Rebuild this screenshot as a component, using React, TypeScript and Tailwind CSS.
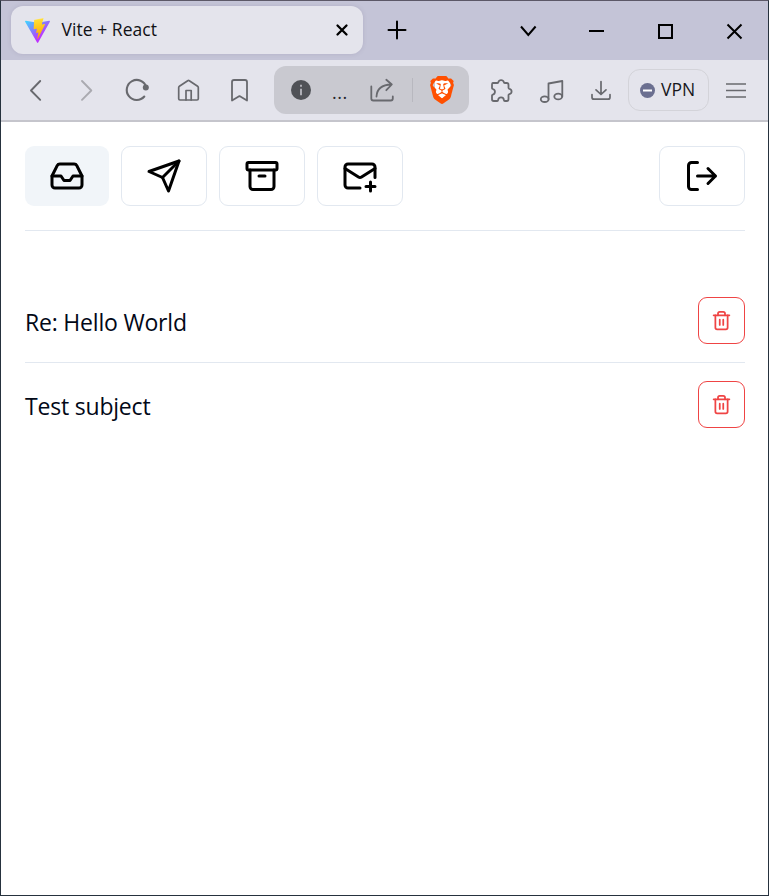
import type { ReactNode } from 'react';
import { SiBrave } from 'react-icons/si';

const UI = "font-['Open_Sans','Noto_Sans',sans-serif] font-normal";

type ArtProps = { x: number; w: number; y?: number; h?: number; color?: string; sw?: number; children: ReactNode };

// Chrome glyphs share the window's coordinate space so neighbours stay aligned.
function Art({ x, w, y = 60, h = 59, color = '#68696e', sw = 1.9, children }: ArtProps) {
  return (
    <svg
      className="block shrink-0"
      width={w}
      height={h}
      viewBox={`${x} ${y} ${w} ${h}`}
      fill="none"
      stroke={color}
      strokeWidth={sw}
      strokeLinecap="round"
      strokeLinejoin="round"
      aria-hidden="true"
    >
      {children}
    </svg>
  );
}

function ViteLogo() {
  return (
    <svg className="block shrink-0" width="25" height="25" viewBox="0 0 256 257" aria-hidden="true">
      <defs>
        <linearGradient id="viteBody" x1="-.8%" x2="57.6%" y1="7.7%" y2="78.4%">
          <stop offset="0%" stopColor="#41D1FF" />
          <stop offset="100%" stopColor="#BD34FE" />
        </linearGradient>
        <linearGradient id="viteBolt" x1="43.4%" x2="50.3%" y1="2.2%" y2="89%">
          <stop offset="0%" stopColor="#FFEA83" />
          <stop offset="8.3%" stopColor="#FFDD35" />
          <stop offset="100%" stopColor="#FFA800" />
        </linearGradient>
      </defs>
      <path fill="url(#viteBody)" d="M255.153 37.938L134.897 252.976c-2.483 4.44-8.862 4.466-11.382.048L.875 37.958c-2.746-4.814 1.371-10.646 6.827-9.67l120.385 21.517a6.537 6.537 0 0 0 2.322-.004l117.867-21.483c5.438-.991 9.574 4.796 6.877 9.62Z" />
      <path fill="url(#viteBolt)" d="M185.432.063L96.44 17.501a3.268 3.268 0 0 0-2.634 3.014l-5.474 92.456a3.268 3.268 0 0 0 3.997 3.378l24.777-5.718c2.318-.535 4.413 1.507 3.936 3.838l-7.361 36.047c-.495 2.426 1.782 4.5 4.151 3.78l15.304-4.649c2.372-.72 4.652 1.36 4.15 3.788l-11.698 56.621c-.732 3.542 3.979 5.473 5.943 2.437l1.313-2.028l72.516-144.72c1.215-2.423-.88-5.186-3.54-4.672l-25.505 4.922c-2.396.462-4.435-1.77-3.759-4.114l16.646-57.705c.677-2.35-1.37-4.583-3.769-4.113Z" />
    </svg>
  );
}

function TabStrip() {
  return (
    <div className="flex h-[59px] shrink-0 bg-[#c4c4d7]">
      <div className="mt-[5px] ml-[9.5px] flex h-12 w-[352.5px] shrink-0 items-center rounded-[12px] bg-[#e4e4ec] pl-[14.5px] shadow-[0_0_4px_rgba(100,90,130,0.18)]">
        <ViteLogo />
        <span className={`ml-[11.5px] w-[180px] pb-[2px] text-[17.5px] leading-6 tracking-[0.05px] text-[#111115] ${UI}`}>Vite + React</span>
        <div className="ml-auto">
          <Art x={328} w={35} y={14} h={32} color="#000" sw={2.3}>
            <path d="M337.5 25.5l9 9M346.500 25.500l-9 9" />
          </Art>
        </div>
      </div>
      <Art x={363} w={132} y={1} h={59} color="#000" sw={2}>
        <path d="M388.5 30h17M397 21.500v17" />
      </Art>
      <div className="ml-auto flex shrink-0">
        <Art x={495} w={66} y={1} h={59} color="#000" sw={2}>
          <path strokeLinecap="butt" d="M521 26.500l7.300 8.500 7.300-8.500" strokeLinejoin="miter" />
        </Art>
        <Art x={561} w={70} y={1} h={59} color="#000" sw={2}>
          <path strokeLinecap="butt" d="M589 31h15" />
        </Art>
        <Art x={631} w={69} y={1} h={59} color="#000" sw={2}>
          <path strokeLinejoin="miter" d="M659 25h13v13h-13z" />
        </Art>
        <Art x={700} w={68} y={1} h={59} color="#000" sw={2}>
          <path strokeLinecap="butt" d="M727.500 24.500l14 14M741.500 24.500l-14 14" />
        </Art>
      </div>
    </div>
  );
}

function BraveLogo() {
  return (
    <div className="grid w-7 shrink-0 place-items-center">
      <div className="col-start-1 row-start-1 h-[20px] w-[15px] rounded-b-[7px] bg-white" />
      <SiBrave className="relative col-start-1 row-start-1 text-[#ff5000]" size={28} />
    </div>
  );
}

function Toolbar() {
  return (
    <div className="flex h-[62px] shrink-0 items-start border-b-2 border-[#c5c5cc] bg-[#e4e4ec] pl-[9px]">
      <Art x={10} w={51}><path d="M40.200 81L31 90.500l9.200 9.300" /></Art>
      <Art x={61} w={51} color="#aaaab0"><path d="M82 81l9.300 9.500-9.300 9.300" /></Art>
      <Art x={112} w={51} sw={2.100}>
        <path d="M146.300 87A10 10 0 1 0 144.300 96.500" />
        <circle cx="145.800" cy="87.500" r="3" fill="#68696e" stroke="none" />
      </Art>
      <Art x={163} w={51} sw={1.7}>
        <path d="M178.700 87.500q0-.8.7-1.300l8.300-5.500q.8-.5 1.600 0l8.300 5.500q.7.500.7 1.300v11.200q0 1.300-1.300 1.300h-17q-1.300 0-1.300-1.300z" />
        <path d="M186 100v-9.500h5.200v9.500" />
      </Art>
      <Art x={214} w={60} sw={1.8}>
        <path d="M234 80h11q2 0 2 2v18.600l-7.500-4.500-7.500 4.500V82q0-2 2-2z" />
      </Art>
      <div className="mt-[6px] flex h-12 w-[195px] shrink-0 items-center rounded-[12px] bg-[#c9c9d0]">
        <Art x={274} w={51} y={66} h={48} sw={1.8}>
          <circle cx="301" cy="90" r="10" fill="#505257" stroke="none" />
          <path stroke="#b9b9c0" strokeLinecap="butt" d="M301 88.700v6.500M301 84.800v2" />
        </Art>
        <span className={`w-[36px] pt-[3px] pl-[7px] text-[18px] leading-6 tracking-[0.5px] text-[#26262b] ${UI}`}>...</span>
        <Art x={361} w={67} y={66} h={48} sw={1.8}>
          <path d="M371.300 86.500v12q0 2 2 2h17.500q2 0 2-2v-2" />
          <path d="M376.500 96.500q.5-11.500 15-12M386.300 79.800l5.500 4.700-5.500 5.700" />
          <path stroke="#b8b8bf" strokeWidth="1" strokeLinecap="butt" d="M412.500 78v24" />
        </Art>
        <BraveLogo />
      </div>
      <Art x={469} w={58} sw={1.8}>
        <path d="M492.700 83h4.700q.9 0 1-.9a2.800 2.800 0 0 1 5.400 0q.1.900 1 .9h2q1.700 0 1.700 1.700v3.100q0 .8.900 1a2.700 2.700 0 0 1 0 5.300q-.9.200-.9 1v4.200q0 1.700-1.700 1.700h-2q-.8 0-.9-.8a2.900 2.900 0 0 0-5.800 0q-.1.800-.9.800h-3.500q-1.700 0-1.700-1.700v-3.800q0-.7.800-.9a2.900 2.900 0 0 0 0-5.600q-.8-.2-.8-.9v-3.400q0-1.700.7-1.700z" />
      </Art>
      <Art x={527} w={49} sw={1.800}>
        <path d="M548.500 99V83.500L562.300 81v15.500" />
        <ellipse cx="544.700" cy="99.200" rx="3.900" ry="2.800" />
        <ellipse cx="558.200" cy="96.500" rx="3.900" ry="2.900" />
      </Art>
      <Art x={576} w={52} sw={1.7}>
        <path d="M601 81.500v12.800M596 89.800l5 4.700 5-4.700M592 94.500v2.700q0 2 2 2h14q2 0 2-2v-2.700" />
      </Art>
      <div className="mt-[9px] flex h-[42px] w-[81px] shrink-0 items-center rounded-[12px] border border-[#d3d3d9] pl-[11px]">
        <Art x={0} w={15} y={0} h={15} sw={2}>
          <circle cx="7.500" cy="7.500" r="7.500" fill="#6b6f90" stroke="none" />
          <path stroke="#fff" strokeLinecap="butt" d="M3 7.500h9" />
        </Art>
        <span className={`ml-[6px] pb-[2px] text-[17.5px] leading-6 text-[#17171c] ${UI}`}>VPN</span>
      </div>
      <Art x={709} w={50} sw={1.6}>
        <path strokeLinecap="butt" d="M726 84h20M726 90.500h20M726 97h20" />
      </Art>
    </div>
  );
}

function Icon({ size, children }: { size: number; children: ReactNode }) {
  return (
    <svg width={size} height={size} viewBox="0 0 24 24" fill="none" stroke="currentColor" strokeWidth="2" strokeLinecap="round" strokeLinejoin="round" aria-hidden="true">
      {children}
    </svg>
  );
}

function NavButton({ label, active = false, children }: { label: string; active?: boolean; children: ReactNode }) {
  return (
    <button
      aria-label={label}
      className={`flex h-[60px] shrink-0 items-center justify-center rounded-[9px] text-black ${active ? 'w-[84px] bg-[#f1f5f9]' : 'w-[86px] border border-[#e2e8f0]'}`}
    >
      <Icon size={36}>{children}</Icon>
    </button>
  );
}

function MailRow({ subject }: { subject: string }) {
  return (
    <li className="flex h-[84px] items-center justify-between border-b border-[#e2e8f0] last:border-transparent">
      <span className={`pt-[2px] text-[23px] leading-9 tracking-[-0.2px] text-[#020817] ${UI}`}>{subject}</span>
      <button aria-label={`Delete ${subject}`} className="flex size-[47px] items-center justify-center rounded-[9px] border border-[#ef4444] text-[#ef4444]">
        <Icon size={21}>
          <path d="M3 6h18" />
          <path d="M19 6v14c0 1-1 2-2 2H7c-1 0-2-1-2-2V6" />
          <path d="M8 6V4c0-1 1-2 2-2h4c1 0 2 1 2 2v2" />
          <path d="M10 11v6M14 11v6" />
        </Icon>
      </button>
    </li>
  );
}

export default function App() {
  return (
    <div className="flex h-[896px] w-[769px] flex-col overflow-hidden border border-[#26323e] border-t-[#5c5867] bg-white">
      <TabStrip />
      <Toolbar />
      <main className="pt-6 pr-[23px] pl-6">
        <nav className="flex h-[85px] gap-3 border-b border-[#e2e8f0]">
          <NavButton label="Inbox" active>
            <path d="M22 12h-6l-2 3h-4l-2-3H2" />
            <path d="M5.450 5.110 2 12v6a2 2 0 0 0 2 2h16a2 2 0 0 0 2-2v-6l-3.450-6.890A2 2 0 0 0 16.760 4H7.240a2 2 0 0 0-1.790 1.110z" />
          </NavButton>
          <NavButton label="Sent">
            <path d="m22 2-7 20-4-9-9-4Z" />
            <path d="M22 2 11 13" />
          </NavButton>
          <NavButton label="Archive">
            <rect width="20" height="5" x="2" y="3" rx="1" />
            <path d="M4 8v11a2 2 0 0 0 2 2h12a2 2 0 0 0 2-2V8" />
            <path d="M10 12h4" />
          </NavButton>
          <NavButton label="Compose">
            <path d="M22 13V6a2 2 0 0 0-2-2H4a2 2 0 0 0-2 2v12c0 1.100.9 2 2 2h8" />
            <path d="m22 7-8.970 5.700a1.940 1.940 0 0 1-2.060 0L2 7" />
            <path d="M19 16v6M16 19h6" />
          </NavButton>
          <div className="ml-auto">
            <NavButton label="Log out">
              <path d="M9 21H5a2 2 0 0 1-2-2V5a2 2 0 0 1 2-2h4" />
              <path d="m16 17 5-5-5-5M21 12H9" />
            </NavButton>
          </div>
        </nav>
        <ul className="mt-12">
          <MailRow subject="Re: Hello World" />
          <MailRow subject="Test subject" />
        </ul>
      </main>
    </div>
  );
}
